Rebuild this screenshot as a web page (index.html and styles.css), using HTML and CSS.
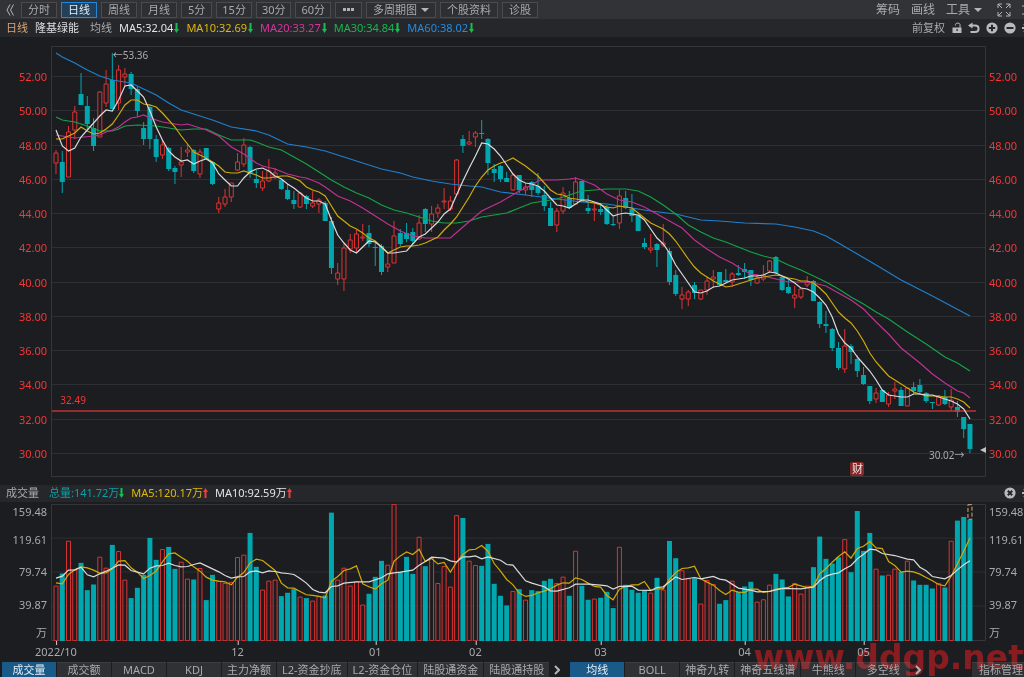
FILE: index.html
```html
<!DOCTYPE html>
<html lang="zh-CN">
<head>
<meta charset="utf-8">
<title>隆基绿能 日线</title>
<link rel="stylesheet" href="styles.css">
</head>
<body>
<div class="app">
  <nav class="toolbar">
    <button class="back" aria-label="收起"><svg width="8" height="12" viewBox="0 0 8 12"><path d="M4 .5 1 6l3 5.500M7.500.5l-3 5.500 3 5.500"/></svg></button>
    <div class="periods">
      <button>分时</button>
      <button class="active">日线</button>
      <button>周线</button>
      <button>月线</button>
      <button>5分</button>
      <button class="minutes">15分</button>
      <button class="minutes">30分</button>
      <button class="minutes">60分</button>
      <button class="more" aria-label="更多"><i></i><i></i><i></i></button>
      <button>多周期图<span class="caret"></span></button>
      <button>个股资料</button>
      <button>诊股</button>
    </div>
    <div class="tools">
      <button>筹码</button>
      <button>画线</button>
      <button>工具<span class="caret"></span></button>
      <button class="expand" aria-label="全屏"><svg width="14" height="14" viewBox="0 0 14 14"><path d="M1 5V1h4M1 1l4 4M9 1h4v4M13 1 9 5M1 9v4h4M1 13l4-4M9 13h4V9M13 13 9 9"/></svg></button>
      <button class="cut" aria-label="设置"><svg width="12" height="12" viewBox="0 0 12 12"><path d="M0 2h12M2 6h8M0 10h12"/></svg></button>
    </div>
  </nav>

  <header class="info">
    <span class="period">日线</span>
    <span class="name">隆基绿能</span>
    <span class="kind">均线</span>
    <span class="c-white">MA5:32.04<svg class="arrow down" width="5" height="10" viewBox="0 0 5 10"><path d="M1.500 0h2v6H5L2.500 10 0 6h1.500z"/></svg></span>
    <span class="c-yellow">MA10:32.69<svg class="arrow down" width="5" height="10" viewBox="0 0 5 10"><path d="M1.500 0h2v6H5L2.500 10 0 6h1.500z"/></svg></span>
    <span class="c-magenta">MA20:33.27<svg class="arrow down" width="5" height="10" viewBox="0 0 5 10"><path d="M1.500 0h2v6H5L2.500 10 0 6h1.500z"/></svg></span>
    <span class="c-green">MA30:34.84<svg class="arrow down" width="5" height="10" viewBox="0 0 5 10"><path d="M1.500 0h2v6H5L2.500 10 0 6h1.500z"/></svg></span>
    <span class="c-blue">MA60:38.02<svg class="arrow down" width="5" height="10" viewBox="0 0 5 10"><path d="M1.500 0h2v6H5L2.500 10 0 6h1.500z"/></svg></span>
    <div class="actions">
      <button class="adjust">前复权</button>
      <button aria-label="锁定"><svg width="10" height="12" viewBox="0 0 10 12"><path class="line" d="M3.500 3.500V2.500C3.500.6 8 .6 8 2.500V6"/><path d="M.5 5.500h9V11h-9z"/><path class="hole" d="M4.500 7h1.200v2H4.500z"/></svg></button>
      <button aria-label="撤销"><svg width="12" height="12" viewBox="0 0 12 12"><path class="line thick" d="M3 3.500h4c4.800 0 4.800 6.500 0 6.500H2.500"/><path d="M0 3.500 4.500.5v6z"/></svg></button>
      <button aria-label="放大"><svg width="12" height="12" viewBox="0 0 12 12"><circle cx="6" cy="6" r="5.600"/><path class="cross" d="M2.800 6h6.400M6 2.800v6.400"/></svg></button>
      <button aria-label="缩小"><svg width="12" height="12" viewBox="0 0 12 12"><circle cx="6" cy="6" r="5.600"/><path class="cross" d="M2.500 6h7"/></svg></button>
      <button aria-label="设置"><svg width="12" height="12" viewBox="0 0 12 12"><circle cx="6" cy="6" r="4"/><path class="line thick" d="M6 0v12M0 6h12M2 2l8 8M10 2l-8 8"/></svg></button>
    </div>
  </header>

  <main class="charts">
    <section class="price">
      <div class="axis left">
        <span>52.00</span><span>50.00</span><span>48.00</span><span>46.00</span><span>44.00</span><span>42.00</span><span>40.00</span><span>38.00</span><span>36.00</span><span>34.00</span><span>32.00</span><span>30.00</span>
      </div>
      <div class="plot">
        <svg id="candles" viewBox="51 46 935 431" preserveAspectRatio="none"></svg>
        <span class="mark high">←53.36</span>
        <span class="mark low">30.02→</span>
        <span class="mark alert">32.49</span>
        <span class="badge">财</span>
        <span class="pointer"></span>
      </div>
      <div class="axis right">
        <span>52.00</span><span>50.00</span><span>48.00</span><span>46.00</span><span>44.00</span><span>42.00</span><span>40.00</span><span>38.00</span><span>36.00</span><span>34.00</span><span>32.00</span><span>30.00</span>
      </div>
    </section>

    <header class="volinfo">
      <span class="kind">成交量</span>
      <span class="c-teal">总量:141.72万<svg class="arrow down" width="5" height="10" viewBox="0 0 5 10"><path d="M1.500 0h2v6H5L2.500 10 0 6h1.500z"/></svg></span>
      <span class="c-yellow">MA5:120.17万<svg class="arrow up" width="5" height="10" viewBox="0 0 5 10"><path d="M1.500 10h2V4H5L2.500 0 0 4h1.500z"/></svg></span>
      <span class="c-white">MA10:92.59万<svg class="arrow up" width="5" height="10" viewBox="0 0 5 10"><path d="M1.500 10h2V4H5L2.500 0 0 4h1.500z"/></svg></span>
      <div class="actions">
        <button aria-label="关闭"><svg width="12" height="12" viewBox="0 0 12 12"><circle cx="6" cy="6" r="5.600"/><path class="cross" d="m3.800 3.800 4.400 4.400M8.200 3.800 3.800 8.200"/></svg></button>
        <button aria-label="设置"><svg width="12" height="12" viewBox="0 0 12 12"><circle cx="6" cy="6" r="4"/><path class="line thick" d="M6 0v12M0 6h12M2 2l8 8M10 2l-8 8"/></svg></button>
      </div>
    </header>

    <section class="volume">
      <div class="axis left"><span>159.48</span><span>119.61</span><span>79.74</span><span>39.87</span><span>万</span></div>
      <div class="plot">
        <svg id="bars" viewBox="51 58 935 412" preserveAspectRatio="none"></svg>
      </div>
      <div class="axis right"><span>159.48</span><span>119.61</span><span>79.74</span><span>39.87</span><span>万</span></div>
    </section>

    <div class="dates" id="dates"></div>
  </main>

  <footer class="tabs">
    <div class="group">
      <button class="active">成交量</button>
      <button>成交额</button>
      <button>MACD</button>
      <button>KDJ</button>
      <button>主力净额</button>
      <button>L2-资金抄底</button>
      <button>L2-资金仓位</button>
      <button>陆股通资金</button>
      <button>陆股通持股</button>
    </div>
    <button class="next" aria-label="下一组"><svg width="6" height="10" viewBox="0 0 6 10"><path d="m1 1 4 4-4 4"/></svg></button>
    <div class="group">
      <button class="active">均线</button>
      <button>BOLL</button>
      <button>神奇九转</button>
      <button>神奇五线谱</button>
      <button>牛熊线</button>
      <button>多空线</button>
    </div>
    <button class="next" aria-label="下一组"><svg width="6" height="10" viewBox="0 0 6 10"><path d="m1 1 4 4-4 4"/></svg></button>
    <button class="manage">指标管理</button>
  </footer>
  <div class="watermark">www.ddgp.net</div>
</div>
<script src="chart.js"></script>
</body>
</html>
```
FILE: styles.css
```css
* { box-sizing: border-box; }

body {
  margin: 0;
  background: #1c1d20;
  color: #a9aaad;
  font: 11px/16px "Noto Sans", "Noto Sans CJK SC", sans-serif;
}

button {
  margin: 0;
  padding: 0;
  border: 0;
  background: none;
  color: inherit;
  font: inherit;
  white-space: nowrap;
}

svg { display: block; }

.app {
  position: relative;
  display: flex;
  flex-direction: column;
  height: 100vh;
  overflow: hidden;
  background: #1c1d20;
}

.toolbar {
  display: flex;
  align-items: center;
  height: 19px;
  flex: none;
  padding-left: 6px;
  background: #323336;
  overflow: hidden;
}
.back { width: 15px; }
.back path, .expand path, .cut path, .next path { fill: none; stroke: #b4b5b8; }
.periods { display: flex; gap: 4px; }
.periods button {
  display: flex;
  align-items: center;
  height: 16px;
  padding: 0 6px;
  border: 1px solid #4a4b4f;
  background: #2e2f32;
  line-height: 14px;
}
.periods .active {
  border-color: #2188d9;
  background: #23405a;
  color: #e6edf3;
}
.periods .minutes { padding: 0 5px; }
.periods .more { gap: 1px; padding: 0 7px; }
.more i { width: 3px; height: 3px; background: #b0b1b4; }
.caret {
  display: inline-block;
  margin-left: 4px;
  border: 4px solid transparent;
  border-top-color: #b4b5b8;
  border-bottom: 0;
}
.tools {
  display: flex;
  align-items: center;
  gap: 11px;
  margin-left: auto;
  font-size: 12px;
}
.tools .caret { vertical-align: 2px; }
.expand { margin-left: 4px; }
.cut { width: 2px; overflow: hidden; }

.info, .volinfo {
  display: flex;
  align-items: center;
  flex: none;
  gap: 7px;
  padding-left: 6px;
  background: #26272a;
  white-space: nowrap;
  overflow: hidden;
}
.info { height: 18px; }
.volinfo { height: 17px; margin: 8px 0 2px; padding-bottom: 1px; }
.info > span, .volinfo > span { display: flex; align-items: center; }
.info .kind { margin-left: 4px; }
.info .arrow { margin-left: 1px; }
.volinfo .kind { margin-right: 3px; }
.period { color: #d8a778; }
.name { color: #dcdde0; }
.c-white { color: #e2e3e5; }
.c-yellow { color: #dfb80a; }
.c-magenta { color: #d8349f; }
.c-green { color: #14b850; }
.c-blue { color: #208ce4; }
.c-teal { color: #0aa0a6; }
.down { fill: #12c04e; }
.up { fill: #f03c3c; }
.actions {
  display: flex;
  align-items: center;
  gap: 6px;
  margin-left: auto;
  margin-right: -10px;
  fill: #b9babd;
}
.adjust { margin-right: 1px; }
.actions .line { fill: none; stroke: #b9babd; stroke-width: 1; }
.actions .thick { stroke-width: 2; }
.actions .cross { stroke: #26272a; stroke-width: 2; }
.actions .hole { fill: #26272a; }

.charts {
  display: flex;
  flex-direction: column;
  flex: 1;
  min-height: 0;
  padding-top: 9px;
}
.price, .volume {
  display: grid;
  grid-template-columns: 51px minmax(0, 1fr) 38px;
  min-height: 0;
}
.price { flex: 431 1 0; }
.volume { flex: 137 1 0; }
.plot { position: relative; min-height: 0; }
.plot svg { width: 100%; height: 100%; position: absolute; }
.axis { min-height: 0; }
.left { text-align: right; padding-right: 4px; }
.right { padding-left: 3px; }
.price .axis {
  display: flex;
  flex-direction: column;
  padding-top: 14px;
  padding-bottom: 6px;
  color: #f43636;
}
.price .axis span { flex: 1; display: flex; align-items: center; }
.price .left span { justify-content: flex-end; }
.volume .axis {
  display: grid;
  grid-template-rows: 14fr 41fr 27fr 41fr 14fr;
  align-items: center;
}

.grid { stroke: #2e2f33; }
.frame { fill: none; stroke: #35363a; }
.alert-line { stroke: #c03032; stroke-width: 1.5; }
.up-bar { fill: #1c1d20; stroke: #dc3434; }
.up-wick { stroke: #dc3434; }
.down-bar { fill: #00a7ae; }
.down-wick { stroke: #00a7ae; }
.forecast { fill: #1c1d20; stroke: #d8a778; stroke-dasharray: 4 2; }
.ma { fill: none; stroke-width: 1.2; }
.ma.white { stroke: #dadbdd; }
.ma.yellow { stroke: #d0aa08; }
.ma.magenta { stroke: #bf3293; }
.ma.green { stroke: #14a348; }
.ma.blue { stroke: #1f80cf; }

.mark { position: absolute; line-height: 12px; font-size: 10px; }
.high { left: 6.600%; top: 0.700%; }
.low { right: 2.300%; top: 93.500%; }
.alert { left: 1%; top: 80.700%; color: #f43636; }
.badge {
  position: absolute;
  left: 85.500%;
  top: 96.500%;
  width: 14px;
  height: 14px;
  border-radius: 2px;
  background: #842828;
  color: #f0e4e4;
  line-height: 14px;
  text-align: center;
}
.pointer {
  position: absolute;
  right: 0;
  top: 93%;
  border: 3px solid transparent;
  border-right: 6px solid #c0c1c4;
  border-left: 0;
}

.dates {
  position: relative;
  flex: none;
  height: 21px;
  margin: 0 38px 0 51px;
}
.dates span {
  position: absolute;
  top: 3px;
  transform: translateX(-50%);
}
.dates span::before {
  content: "";
  position: absolute;
  left: 50%;
  top: -3px;
  width: 1px;
  height: 4px;
  background: #d0d1d4;
}

.tabs {
  display: flex;
  flex: none;
  height: 15px;
  padding-left: 2px;
}
.group { display: flex; gap: 1px; }
.tabs button { line-height: 14px; height: 15px; }
.group button, .manage {
  min-width: 54px;
  padding: 0 5px;
  background: #303134;
  border-top: 1px solid #3c3d40;
}
.group .active { background: #195a89; border-top-color: #195a89; color: #e6edf3; }
.tabs .next { width: 21px; padding-left: 5px; }
.next path { stroke-width: 2; }
.tabs .manage { margin-left: auto; min-width: 0; padding: 0 1px 0 7px; }

.watermark {
  position: absolute;
  right: 0;
  bottom: 0;
  color: #870d11;
  font: bold 33px/38px "DejaVu Sans", sans-serif;
  mix-blend-mode: lighten;
  pointer-events: none;
}
```
FILE: chart.js
```js
const STEP = 6.26;
const FIRST = 56;
const xAt = i => FIRST + STEP * i;

// kind, body top, body bottom, wick top, wick bottom, volume top
const days = `
R 153 163 150 174 304|G 162 182 151 193 267|R 132 177 126 177 169|R 112 130 106 139 256|G 94 105 73 105 235
G 106 124 96 129 317|G 128 146 118 151 300|R 92 137 91 137 217|R 84 103 70 107 250|G 80 109 53 109 181
R 70 103 65 110 200|R 74 77 68 87 286|G 74 89 72 95 341|G 89 111 87 117 310|G 128 139 122 145 271
G 107 139 104 149 160|G 139 157 135 162 226|R 145 155 139 159 194|G 148 169 147 171 187|G 168 172 166 184 253
R 162 165 147 177 232|R 150 152 144 157 283|G 150 171 149 173 285|R 152 174 149 178 251|G 148 159 148 159 347
G 162 184 161 185 271|R 203 209 197 213 290|R 197 204 189 207 296|R 183 197 183 202 293|R 162 170 153 171 218
R 145 164 138 167 211|G 147 173 146 178 145|G 179 183 170 188 247|R 181 188 171 191 316|R 171 181 159 182 289
R 173 177 168 179 286|G 180 189 179 190 335|G 190 199 184 200 325|G 200 204 191 209 314|R 193 207 192 208 337
G 196 204 195 209 341|R 203 206 191 208 349|R 200 204 198 213 335|G 203 221 201 221 333|G 221 268 217 274 84
R 273 279 263 285 286|R 248 279 244 291 250|R 240 249 234 253 304|R 234 248 230 253 291|R 237 238 224 241 361
G 233 244 225 247 328|G 247 248 241 266 277|G 246 272 244 275 229|R 264 267 252 272 241|R 236 263 221 263 58
G 233 244 229 246 262|G 233 239 223 242 217|G 232 241 228 244 268|R 223 239 215 240 157|G 209 224 208 232 245
R 214 224 206 232 220|R 208 213 204 218 296|R 201 202 188 209 245|R 201 209 196 211 307|R 160 194 159 195 92
G 139 146 135 153 100|R 142 144 131 145 229|R 133 137 131 147 242|G 133 134 120 139 244|G 139 163 138 175 178
G 169 173 164 182 298|G 166 179 165 182 334|G 178 182 172 182 363|R 175 190 173 191 320|G 175 190 175 193 314
R 187 190 183 195 346|G 182 190 181 197 317|G 186 193 173 195 320|G 195 206 186 211 289|G 208 226 202 226 283
R 211 225 208 232 296|R 193 211 187 214 277|G 198 208 191 209 334|R 182 204 177 205 199|G 181 202 181 202 304
G 208 211 195 214 346|R 209 210 204 221 343|G 209 212 203 215 340|G 207 224 205 225 322|G 224 225 217 226 371
R 196 223 190 229 187|G 198 208 191 209 301|G 209 216 194 222 316|G 215 231 215 231 325|G 243 247 238 249 317
R 248 250 234 253 325|G 244 250 243 267 280|R 243 245 224 247 316|G 251 282 248 285 169|G 275 294 270 296 221
R 295 299 287 309 258|R 292 299 290 306 282|G 285 293 282 299 281|R 290 299 290 300 358|R 281 290 277 295 287
R 277 279 270 288 299|G 272 285 272 286 358|G 280 282 269 283 347|R 274 282 272 287 289|G 273 275 265 276 322
G 269 272 263 279 306|G 270 280 270 286 292|R 278 283 274 284 352|R 275 279 265 281 345|R 261 271 260 272 301
G 257 273 256 274 268|G 277 290 276 291 285|G 287 293 280 294 336|R 295 298 286 308 296|R 289 297 287 299 328
R 282 285 276 287 304|G 281 301 280 301 248|G 302 324 301 328 156|G 324 326 311 333 223|G 329 348 328 351 237
G 348 368 342 370 218|R 346 369 329 373 164|G 346 352 344 364 263|G 359 371 355 377 79|G 375 384 367 385 199
G 386 401 386 404 145|R 393 399 388 403 253|G 390 402 390 402 273|R 395 404 392 407 271|R 389 391 382 399 253
G 390 406 387 406 262|R 388 406 388 406 229|G 387 391 382 394 288|G 385 392 379 394 301|G 393 401 392 403 301
G 402 403 402 409 312|R 397 405 395 406 296|G 397 404 390 405 309|R 400 407 389 411 169|G 407 412 401 417 108
G 417 429 417 438 97|G 424 449 424 453 105`
  .trim().split(/[|\n]/).map(row => {
    const [kind, ...n] = row.split(' ');
    return [kind, ...n.map(Number)];
  });

// dense lines: one value per day
const ma5 = [130,146,151,148,137,130,123,116,110,111,100,86,85,91,97,111,127,140,151,157,161,160,164,161,159,163,174,180,186,186,178,172,169,168,171,176,179,184,188,193,198,201,201,204,220,235,243,250,253,247,241,242,247,253,253,252,251,244,237,234,228,222,214,209,195,181,168,156,143,144,149,156,165,174,180,183,184,186,191,198,205,206,208,204,200,200,202,204,210,216,214,213,214,215,220,229,238,244,253,265,274,283,292,293,291,287,286,283,280,279,278,276,276,275,272,273,276,279,283,288,289,292,298,305,317,334,343,348,357,364,371,380,390,395,396,397,397,394,394,395,395,397,399,401,404,409,419];
const ma10 = [139,139,136,133,127,131,134,133,129,124,115,105,100,100,104,105,107,113,120,127,136,144,152,155,158,162,166,172,173,173,171,173,175,178,178,177,176,176,178,181,187,190,192,196,206,216,221,226,229,233,238,241,247,253,250,247,246,246,245,243,240,237,230,224,217,207,197,186,177,170,166,163,161,158,162,166,171,176,183,190,194,195,198,199,200,202,203,205,207,208,206,207,208,213,218,223,226,229,234,241,250,259,267,273,277,281,284,287,286,284,282,280,278,277,276,275,276,278,279,281,281,283,288,294,303,312,318,323,331,341,353,362,369,376,380,384,388,392,394,396,396,396,397,397,399,402,408];
const vol5 = [295,298,270,256,247,250,257,266,265,253,230,228,250,263,282,273,260,232,208,205,218,230,247,260,278,287,290,292,301,278,264,235,224,228,243,258,296,310,311,321,331,333,336,340,291,276,258,253,244,298,307,314,298,287,230,214,202,210,194,231,222,238,234,263,233,210,196,194,183,200,237,260,285,301,326,336,333,325,320,313,302,295,296,280,285,296,306,308,333,346,314,306,301,301,291,318,313,313,284,264,252,250,245,283,293,302,318,330,317,323,324,314,314,324,321,314,312,309,299,304,309,305,268,252,233,216,202,221,192,185,171,190,192,231,243,263,260,262,269,279,289,300,304,275,238,200,160];

// sparse lines: day:value pairs
const ma20 = '0:135 3:138 6:136 7:135 8:132 9:130 10:127 11:122 12:118 13:117 14:115 15:118 17:122 20:125 21:124 22:126 24:130 26:136 28:147 30:154 32:163 33:166 35:169 37:174 39:177 40:178 42:183 43:187 45:196 47:201 49:208 51:216 53:224 55:231 57:236 59:238 63:238 65:227 68:211 71:202 74:191 76:185 77:181 78:180 80:180 82:179 83:178 84:180 86:185 88:194 89:197 90:200 92:202 94:207 96:214 98:221 100:228 102:240 104:249 106:257 108:263 110:271 111:274 113:276 115:279 117:282 119:282 121:283 123:286 125:293 127:300 129:309 131:322 133:334 135:348 138:363 140:374 142:383 144:391 145:393 146:398';
const ma30 = '0:117 1:120 3:122 5:126 7:131 9:131 10:129 11:126 13:125 16:126 18:128 20:130 22:129 24:129 25:132 26:135 28:140 31:140 32:142 34:147 36:150 38:157 40:164 42:172 44:180 46:187 48:193 50:198 52:205 54:210 56:213 58:217 60:221 62:223 64:223 66:221 68:217 70:215 72:213 74:208 76:203 78:201 80:199 82:195 84:191 86:190 88:189 91:189 93:191 95:197 97:205 99:214 101:225 103:232 105:238 107:242 109:247 111:252 113:256 115:259 117:265 119:270 121:276 123:282 125:289 127:297 129:304 131:312 133:319 136:332 139:344 142:357 144:363 146:371';
const ma60 = '0:53 1:57 3:63 5:70 7:76 9:80 12:83 14:89 16:95 18:103 20:110 22:114 25:120 28:127 32:131 34:135 37:144 40:147 43:151 46:157 49:163 52:169 55:173 57:177 60:181 63:184 66:186 68:187 71:192 75:195 80:199 84:202 88:204 92:208 95:211 99:214 101:217 103:220 106:221 110:223 115:224 118:227 121:231 123:236 125:243 128:254 131:265 135:280 140:296 146:316';
const vol10 = '0:281 1:275 2:257 3:256 4:248 5:271 6:277 7:268 8:260 9:251 10:241 11:242 12:258 13:263 14:268 15:251 16:244 17:243 18:236 19:243 20:247 21:246 22:240 23:235 24:244 25:253 26:262 27:273 28:281 29:277 30:276 31:262 32:259 33:265 34:259 35:261 36:265 37:267 38:270 39:282 40:296 41:315 42:323 43:325 44:306 45:304 46:296 48:292 50:292 52:280 53:268 54:265 55:263 57:257 58:242 59:231 60:218 62:221 63:229 64:233 65:217 66:217 67:214 68:223 69:217 71:227 72:240 73:242 74:265 75:289 76:296 78:307 79:319 80:320 82:310 83:299 85:299 87:302 88:304 89:314 90:306 92:305 93:317 95:318 96:309 97:307 98:292 99:277 100:285 102:279 103:283 105:276 106:284 107:287 109:311 111:317 112:322 114:321 116:312 119:313 120:310 121:308 122:288 123:275 124:269 125:265 126:253 127:243 128:223 129:209 130:194 131:196 132:207 134:213 136:224 137:226 138:248 139:259 140:276 142:283 143:273 144:256 145:241 146:229';

const NS = 'vector-effect="non-scaling-stroke"';
const line = (cls, x1, y1, x2, y2) =>
  `<line class="${cls}" x1="${x1}" y1="${y1}" x2="${x2}" y2="${y2}" ${NS}/>`;
const rect = (cls, x, y, w, h) =>
  `<rect class="${cls}" x="${x}" y="${y}" width="${w}" height="${h}" ${NS}/>`;

function curve(cls, data) {
  const points = Array.isArray(data)
    ? data.map((y, i) => [i, y])
    : data.split(' ').map(p => p.split(':').map(Number));
  return `<polyline class="ma ${cls}" ${NS} points="${points.map(([i, y]) => `${xAt(i).toFixed(1)},${y}`).join(' ')}"/>`;
}

function drawPrice() {
  let out = '';
  for (let k = 0; k < 12; k++) {
    const y = Math.round(77 + k * 34.27) - 0.5;
    out += line('grid', 51, y, 985, y);
  }
  out += rect('frame', 51.5, 46.5, 934, 430);
  days.forEach(([kind, top, bottom, high, low], i) => {
    const x = xAt(i);
    if (kind === 'R') {
      out += line('up-wick', x, high, x, low);
      out += rect('up-bar', x - 2, top, 4, Math.max(bottom - top, 1));
    } else {
      out += line('down-wick', x, high, x, low);
      out += rect('down-bar', x - 2.5, top, 5, Math.max(bottom - top, 1));
    }
  });
  out += line('alert-line', 52, 411, 976, 411);
  out += curve('blue', ma60) + curve('green', ma30) + curve('magenta', ma20);
  out += curve('yellow', ma10) + curve('white', ma5);
  document.getElementById('candles').innerHTML = out;
}

function drawVolume() {
  let out = '';
  [160.500, 262.500, 365].forEach(y => { out += line('grid', 51, y, 985, y); });
  out += rect('frame', 51.5, 59.500, 934, 409);
  days.forEach(([kind, , , , , top], i) => {
    const x = xAt(i);
    out += kind === 'R'
      ? rect('up-bar', x - 2, top + 1, 4, 468 - top)
      : rect('down-bar', x - 2.5, top, 5, 470 - top);
  });
  out += rect('forecast', xAt(146) - 2, 60, 4, 44);
  out += curve('yellow', vol5) + curve('white', vol10);
  document.getElementById('bars').innerHTML = out;
}

function drawDates() {
  const marks = [[0, '2022/10'], [29, '12'], [51, '01'], [67, '02'], [87, '03'], [110, '04'], [129, '05']];
  document.getElementById('dates').innerHTML = marks
    .map(([i, text]) => `<span style="left:${((xAt(i) - 51) / 935 * 100).toFixed(2)}%">${text}</span>`)
    .join('');
}

drawPrice();
drawVolume();
drawDates();
```
